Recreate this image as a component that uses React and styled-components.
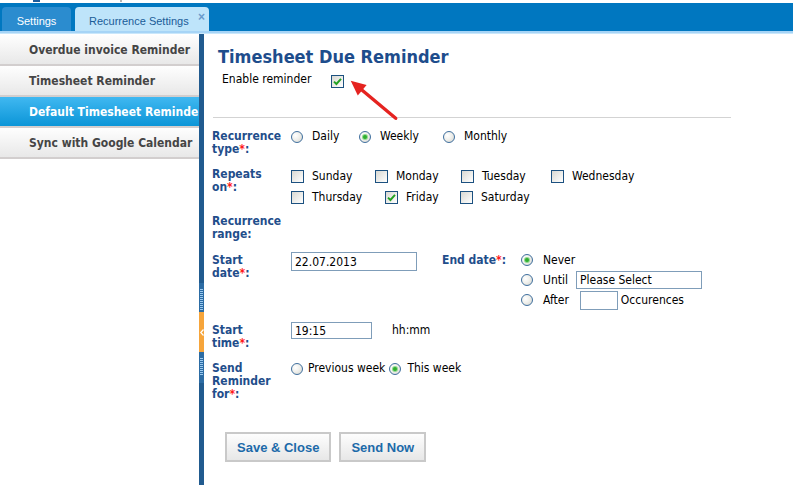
import React from 'react';
import styled, { createGlobalStyle } from 'styled-components';

const TAHOMA = `"DejaVu Sans Condensed", "DejaVu Sans", Tahoma, sans-serif`;
const ARIAL = `"Liberation Sans", Arial, sans-serif`;
const LABEL_BLUE = '#1f4e8b';

const GlobalStyle = createGlobalStyle`
  html, body { margin: 0; padding: 0; background: #fff; overflow: hidden; }
  body { font-family: ${TAHOMA}; font-stretch: condensed; font-size: 12px; color: #000; }
  * { box-sizing: border-box; }
`;

const Page = styled.div`
  width: 793px;
  height: 485px;
  display: flex;
  flex-direction: column;
  overflow: hidden;
`;

const TopStrip = styled.div`
  height: 3px;
  display: flex;
  align-items: flex-start;
`;

const StripMark = styled.span`
  margin-left: ${p => p.$left}px;
  width: ${p => p.$w}px;
  height: ${p => p.$h}px;
  background: ${p => p.$color};
`;

const TabBar = styled.div`
  height: 28px;
  background: #0077c0;
  display: flex;
  align-items: flex-end;
  gap: 4px;
  padding-left: 2px;
`;

const Tab = styled.div`
  width: ${p => (p.$active ? 134 : 69)}px;
  height: 24px;
  padding-top: 3px;
  padding-left: ${p => (p.$active ? 14 : 0)}px;
  border-radius: 4px 4px 0 0;
  background: ${p => (p.$active ? '#bee4fa' : '#2b8ccf')};
  color: ${p => (p.$active ? '#1a5c98' : '#ffffff')};
  font-family: ${ARIAL};
  font-size: 11px;
  display: flex;
  align-items: center;
  justify-content: ${p => (p.$active ? 'flex-start' : 'center')};
  white-space: nowrap;
`;

const TabClose = styled.span`
  align-self: flex-start;
  margin-left: auto;
  margin-right: 4px;
  margin-top: 1px;
  font-size: 12px;
  font-weight: bold;
  line-height: 12px;
  color: #6a9acb;
`;

const TabBand = styled.div`
  height: 3px;
  background: linear-gradient(to bottom, #a6d4f6 0 2px, #c9e7fb 2px 3px);
`;

const Body = styled.div`
  flex: 1;
  display: flex;
  min-height: 0;
`;

const Sidebar = styled.div`
  width: 199px;
  flex-shrink: 0;
  padding-top: 1px;
  display: flex;
  flex-direction: column;
`;

const MenuItem = styled.div`
  height: 31px;
  padding-left: 29px;
  padding-top: 1px;
  line-height: 28px;
  border-bottom: 2px solid #d2cece;
  font-family: ${TAHOMA};
  font-weight: bold;
  font-size: 12px;
  white-space: nowrap;
  overflow: hidden;
  color: ${p => (p.$active ? '#ffffff' : '#454545')};
  background: ${p =>
    p.$active
      ? 'linear-gradient(to bottom, #40b8f1, #0b95d7)'
      : 'linear-gradient(to bottom, #fefefe, #e8e8e8)'};
`;

const Splitter = styled.div`
  width: 5px;
  flex-shrink: 0;
  background: #215b8f;
  display: flex;
  flex-direction: column;
  padding-top: 249px;
`;

const Grip = styled.div`
  height: ${p => p.$h}px;
  padding: ${p => p.$pad};
  background: #2c6ca4;
  display: flex;
`;

const GripLines = styled.div`
  flex: 1;
  margin: 0 1px;
  background: repeating-linear-gradient(to bottom, #9ccaf0 0 1px, transparent 1px 2px);
`;

const GripButton = styled.div`
  height: 40px;
  background: #f6a53b;
  display: flex;
  align-items: center;
  justify-content: center;
`;

const Main = styled.div`
  position: relative;
  flex: 1;
  padding: 12px 0 0 8px;
`;

const Title = styled.h1`
  margin: 0 0 0 6px;
  font-family: ${TAHOMA};
  font-size: 18px;
  line-height: 22px;
  font-weight: bold;
  color: #1e4d8c;
`;

const EnableRow = styled.div`
  margin: 4px 0 0 10px;
  display: flex;
  align-items: flex-start;
`;

const EnableLabel = styled.span`
  width: 109px;
  line-height: 14px;
`;

const Box = styled.span`
  width: 13px;
  height: 13px;
  flex-shrink: 0;
  margin-top: ${p => p.$mt || 0}px;
  border: 1px solid #1c5180;
  background: linear-gradient(135deg, #d8d8d2 0%, #f4f4f2 70%, #ffffff 100%);
  display: flex;
  align-items: center;
  justify-content: center;
`;

const CheckBox = ({ checked, mt }) => (
  <Box $mt={mt}>
    {checked && (
      <svg width="9" height="9" viewBox="0 0 9 9">
        <path d="M1 4.6 L3.4 7 L8 1.8" fill="none" stroke="#22a122" strokeWidth="1.9" />
      </svg>
    )}
  </Box>
);

const Radio = styled.span`
  width: 12px;
  height: 12px;
  flex-shrink: 0;
  margin-top: ${p => p.$mt || 0}px;
  border-radius: 50%;
  border: 1px solid #3f6f9e;
  background: radial-gradient(circle at 35% 35%, #ffffff 0%, #f0f0ec 45%, #d2d2cc 100%);
  display: flex;
  align-items: center;
  justify-content: center;
  &::after {
    content: '';
    display: ${p => (p.$checked ? 'block' : 'none')};
    width: 4px;
    height: 4px;
    border-radius: 50%;
    background: #2fae2f;
    box-shadow: 0 0 0 1px #8fd88f;
  }
`;

const Arrow = styled.svg`
  position: absolute;
  left: 138px;
  top: 44px;
`;

const Rule = styled.div`
  margin: 29px 0 0 1px;
  width: 518px;
  height: 1px;
  background: #d3d3d3;
`;

const Form = styled.div`
  margin-top: 12px;
  display: flex;
  flex-direction: column;
`;

const Field = styled.div`
  display: grid;
  grid-template-columns: 79px 1fr;
  align-items: start;
  min-height: ${p => p.$h}px;
`;

const FieldLabel = styled.div`
  width: ${p => (p.$w ? `${p.$w}px` : 'auto')};
  margin-left: ${p => p.$ml || 0}px;
  flex-shrink: 0;
  font-family: ${TAHOMA};
  font-weight: bold;
  font-size: 12px;
  line-height: 13px;
  color: ${LABEL_BLUE};
`;

const Req = styled.span`
  color: #ff1a1a;
`;

const Inline = styled.div`
  display: flex;
  align-items: flex-start;
  margin-top: ${p => p.$mt || 0}px;
`;

const Lines = styled.div`
  display: flex;
  flex-direction: column;
  margin-top: ${p => p.$mt || 0}px;
  margin-left: ${p => p.$ml || 0}px;
`;

const Line = styled.div`
  height: ${p => p.$h}px;
  display: flex;
  align-items: center;
`;

const Choice = styled.div`
  display: flex;
  align-items: ${p => (p.$center ? 'center' : 'flex-start')};
  width: ${p => (p.$w ? `${p.$w}px` : 'auto')};
  margin-left: ${p => p.$ml || 0}px;
  flex-shrink: 0;
`;

const OptText = styled.span`
  margin-left: ${p => p.$gap || 0}px;
  line-height: 13px;
  white-space: nowrap;
`;

const TextInput = styled.div`
  width: ${p => p.$w}px;
  height: ${p => p.$h}px;
  margin-top: ${p => p.$mt || 0}px;
  margin-left: ${p => p.$ml || 0}px;
  flex-shrink: 0;
  border: 1px solid #7f9db9;
  background: #fff;
  padding-left: 3px;
  font-size: 12px;
  display: flex;
  align-items: center;
  white-space: nowrap;
`;

const Buttons = styled.div`
  display: flex;
  gap: 8px;
  margin: 31px 0 0 13px;
`;

const Button = styled.button`
  height: 30px;
  padding: 0 10px;
  border: 2px solid #c9c9c9;
  background: linear-gradient(to bottom, #fdfdfd, #e7e7e7);
  color: #1c6aa9;
  font-family: ${ARIAL};
  font-weight: bold;
  font-size: 13px;
  cursor: pointer;
`;

const menu = [
  'Overdue invoice Reminder',
  'Timesheet Reminder',
  'Default Timesheet Reminder',
  'Sync with Google Calendar',
];

export default function App() {
  return (
    <>
      <GlobalStyle />
      <Page>
        <TopStrip>
          <StripMark $left={33} $w={7} $h={2} $color="#1d5d9c" />
          <StripMark $left={80} $w={2} $h={2} $color="#b5b5b5" />
        </TopStrip>
        <TabBar>
          <Tab>Settings</Tab>
          <Tab $active>
            Recurrence Settings
            <TabClose>×</TabClose>
          </Tab>
        </TabBar>
        <TabBand />
        <Body>
          <Sidebar>
            {menu.map((m, i) => (
              <MenuItem key={m} $active={i === 2}>
                {m}
              </MenuItem>
            ))}
          </Sidebar>
          <Splitter>
            <Grip $h={29} $pad="6px 0 2px">
              <GripLines />
            </Grip>
            <GripButton>
              <svg width="4" height="7" viewBox="0 0 4 7">
                <polyline points="3.5,0.5 0.8,3.5 3.5,6.5" fill="none" stroke="#fff" strokeWidth="1.2" />
              </svg>
            </GripButton>
            <Grip $h={31} $pad="6px 0 8px">
              <GripLines />
            </Grip>
          </Splitter>
          <Main>
            <Title>Timesheet Due Reminder</Title>
            <EnableRow>
              <EnableLabel>Enable reminder</EnableLabel>
              <CheckBox checked mt={3} />
            </EnableRow>
            <Arrow width="60" height="46" viewBox="0 0 60 46">
              <line x1="53.7" y1="40.3" x2="19" y2="11.3" stroke="#e52320" strokeWidth="3.4" strokeLinecap="round" />
              <polygon points="8.7,2.7 24.6,7.1 15.8,17.5" fill="#e52320" />
            </Arrow>
            <Rule />
            <Form>
              <Field $h={38}>
                <FieldLabel>
                  Recurrence
                  <br />
                  type<Req>*</Req>:
                </FieldLabel>
                <Inline>
                  <Choice $w={68}>
                    <Radio $mt={1} />
                    <OptText $gap={9}>Daily</OptText>
                  </Choice>
                  <Choice $w={84}>
                    <Radio $mt={1} $checked />
                    <OptText $gap={9}>Weekly</OptText>
                  </Choice>
                  <Choice>
                    <Radio $mt={1} />
                    <OptText $gap={9}>Monthly</OptText>
                  </Choice>
                </Inline>
              </Field>

              <Field $h={47}>
                <FieldLabel>
                  Repeats
                  <br />
                  on<Req>*</Req>:
                </FieldLabel>
                <Lines $mt={-2}>
                  <Line $h={21}>
                    <Choice $center $w={84}>
                      <CheckBox />
                      <OptText $gap={8}>Sunday</OptText>
                    </Choice>
                    <Choice $center $w={86}>
                      <CheckBox />
                      <OptText $gap={8}>Monday</OptText>
                    </Choice>
                    <Choice $center $w={90}>
                      <CheckBox />
                      <OptText $gap={8}>Tuesday</OptText>
                    </Choice>
                    <Choice $center>
                      <CheckBox />
                      <OptText $gap={8}>Wednesday</OptText>
                    </Choice>
                  </Line>
                  <Line $h={21}>
                    <Choice $center $w={94}>
                      <CheckBox />
                      <OptText $gap={8}>Thursday</OptText>
                    </Choice>
                    <Choice $center $w={75}>
                      <CheckBox checked />
                      <OptText $gap={8}>Friday</OptText>
                    </Choice>
                    <Choice $center>
                      <CheckBox />
                      <OptText $gap={8}>Saturday</OptText>
                    </Choice>
                  </Line>
                </Lines>
              </Field>

              <Field $h={39}>
                <FieldLabel>
                  Recurrence
                  <br />
                  range:
                </FieldLabel>
              </Field>

              <Field $h={70}>
                <FieldLabel>
                  Start
                  <br />
                  date<Req>*</Req>:
                </FieldLabel>
                <Inline>
                  <TextInput $w={126} $h={19} $mt={-2}>22.07.2013</TextInput>
                  <FieldLabel $w={79} $ml={25}>
                    End date<Req>*</Req>:
                  </FieldLabel>
                  <Lines $mt={-4}>
                    <Line $h={20}>
                      <Radio $checked />
                      <OptText $gap={10}>Never</OptText>
                    </Line>
                    <Line $h={20}>
                      <Radio />
                      <OptText $gap={10}>Until</OptText>
                      <TextInput $w={126} $h={18} $ml={8}>Please Select</TextInput>
                    </Line>
                    <Line $h={20}>
                      <Radio />
                      <OptText $gap={10}>After</OptText>
                      <TextInput $w={38} $h={19} $ml={11} />
                      <OptText $gap={3}>Occurences</OptText>
                    </Line>
                  </Lines>
                </Inline>
              </Field>

              <Field $h={38}>
                <FieldLabel>
                  Start
                  <br />
                  time<Req>*</Req>:
                </FieldLabel>
                <Inline>
                  <TextInput $w={81} $h={17} $mt={-2}>19:15</TextInput>
                  <OptText $gap={20}>hh:mm</OptText>
                </Inline>
              </Field>

              <Field $h={39}>
                <FieldLabel>
                  Send
                  <br />
                  Reminder
                  <br />
                  for<Req>*</Req>:
                </FieldLabel>
                <Inline>
                  <Radio $mt={1} />
                  <OptText $gap={5}>Previous week</OptText>
                  <Choice $ml={4}>
                    <Radio $mt={1} $checked />
                    <OptText $gap={6}>This week</OptText>
                  </Choice>
                </Inline>
              </Field>
            </Form>
            <Buttons>
              <Button>Save &amp; Close</Button>
              <Button>Send Now</Button>
            </Buttons>
          </Main>
        </Body>
      </Page>
    </>
  );
}
